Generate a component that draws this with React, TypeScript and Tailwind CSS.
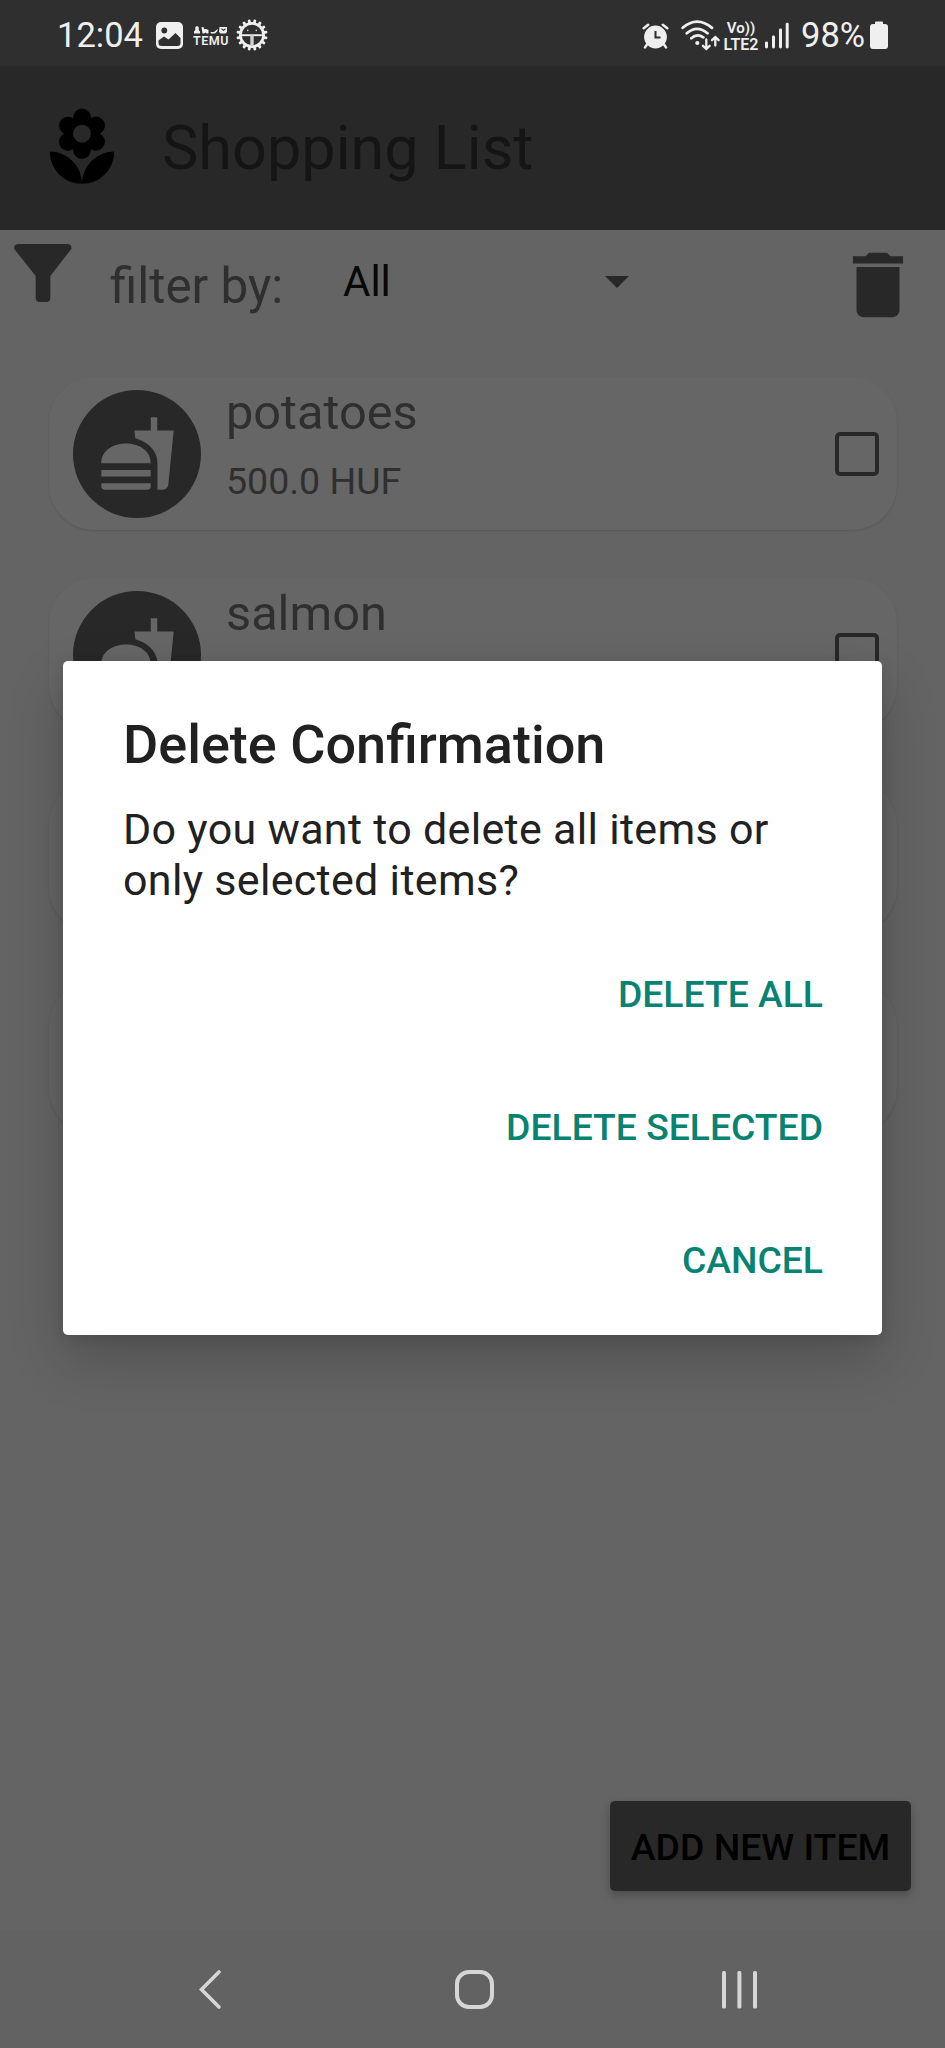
import { MdDelete, MdFastfood, MdLocalFlorist } from "react-icons/md";

const teeth = Array.from({ length: 16 }, (_, i) => i * 22.5);

function StatusBar() {
  return (
    <div className="flex h-[66px] w-full items-start bg-[#2f2f2f] text-[#efefef]">
      <span className="ml-[57px] mt-[15px] w-[98px] whitespace-nowrap text-[34.5px] leading-[40px]">12:04</span>
      <svg className="mt-[22px] ml-[1px] h-[27px] w-[27px]" viewBox="0 0 27 27">
        <rect width="27" height="27" rx="5" fill="#efefef" />
        <circle cx="8.3" cy="8.5" r="2.9" fill="#2f2f2f" />
        <path d="M2.5 20V18.5L8 14.5L12.5 17.5L19.5 11L24.5 16V21Q24.5 24 21.5 24H5.5Q2.5 24 2.5 21Z" fill="#2f2f2f" />
      </svg>
      <div className="ml-[10px] mt-[26px] flex w-[36px] flex-col">
        <svg className="h-[8px] w-[35px]" viewBox="0 0 35 8" fill="#efefef">
          <path d="M1 7.5V5.5L2.3 4V1L4 0L5.7 1V4L7 5.5V7.5ZM8.5 1L11 1.5V3H13L15.5 4V7.5H13.5L12.5 6.5L11 7.5H9.5ZM17.5 6H21L24.5 3V5L22 7.5H18ZM26.5 1H34V6L32.5 7.5H27.5L26 6ZM28 3L30.5 5L33 3L32 2.5L30.5 3.5L29 2.5Z" fillRule="evenodd" />
        </svg>
        <span className="-mt-[0.5px] whitespace-nowrap text-[12.5px] font-semibold leading-[14px] tracking-[0.5px]">TEMU</span>
      </div>
      <svg className="ml-[6.5px] mt-[19px] h-[32px] w-[32px]" viewBox="-16 -16 32 32">
        {teeth.map((a) => (
          <rect key={a} x="-1.4" y="-15.6" width="2.8" height="5" rx="1" fill="#efefef" transform={`rotate(${a + 11.25})`} />
        ))}
        <circle r="11.6" fill="none" stroke="#efefef" strokeWidth="2.8" />
        <path d="M-11 .2H11" stroke="#efefef" strokeWidth="1.9" />
        <path d="M0 0V11" stroke="#d0d0d0" strokeWidth="3.4" />
        <circle cx="-4.3" cy="-4.6" r=".8" fill="#cccccc" />
        <circle cx="4.3" cy="-4.6" r=".8" fill="#cccccc" />
      </svg>
      <svg className="ml-auto mt-[23px] h-[26px] w-[27px]" viewBox="0 0 27 26">
        <circle cx="13.5" cy="14" r="11.4" fill="#efefef" />
        <path d="M1.7 5.2L6.2 1.7M25.3 5.2L20.8 1.7M5 21.5L3 24.4M22 21.5L24 24.4" stroke="#efefef" strokeWidth="2.5" strokeLinecap="round" />
        <path d="M13.5 8V14.5H18.5" stroke="#2f2f2f" strokeWidth="2" fill="none" />
      </svg>
      <svg className="ml-[12px] mt-[20px] h-[31px] w-[39px]" viewBox="0 0 39 31" fill="none" stroke="#efefef" strokeLinecap="round" strokeWidth="2.8">
        <path d="M1.7 7.8Q16 -4.5 31 7.8M5.8 13.3Q16 4.5 26.5 13.3M10.3 18.3Q16 13 22.3 17.3" />
        <circle cx="16.3" cy="23" r="2.1" fill="#efefef" stroke="none" />
        <path d="M25.3 19.5V28.5M22 25.8L25.3 29L28.6 25.8M34.3 25.5V17.5M31 20.2L34.3 17L37.6 20.2" strokeWidth="2.3" />
      </svg>
      <div className="ml-[3px] mt-[20px] flex w-[36px] flex-col items-center">
        <span className="whitespace-nowrap text-[15px] font-semibold leading-[16px]">Vo))</span>
        <span className="-mt-[0.5px] whitespace-nowrap text-[16px] font-semibold leading-[17px]">LTE2</span>
      </div>
      <svg className="ml-[6px] mt-[22px] h-[27px] w-[25px]" viewBox="0 0 25 27" fill="#efefef">
        <rect x="0" y="19.5" width="3" height="7" rx="1.4" />
        <rect x="7" y="13.5" width="3" height="13" rx="1.4" />
        <rect x="14" y="6.5" width="3" height="20" rx="1.4" />
        <rect x="20.7" y="0.7" width="3" height="25.8" rx="1.4" />
      </svg>
      <span className="ml-[11px] mt-[15px] w-[65px] whitespace-nowrap text-[34.5px] leading-[40px]">98%</span>
      <svg className="ml-[4px] mr-[57px] mt-[21px] h-[28px] w-[18px]" viewBox="0 0 18 28" fill="#efefef">
        <path d="M5 3V1.5Q5 .5 6 .5H12Q13 .5 13 1.5V3H15Q18 3 18 6V25Q18 28 15 28H3Q0 28 0 25V6Q0 3 3 3Z" />
      </svg>
    </div>
  );
}

function ItemCard({ name, price }: { name: string; price: string }) {
  return (
    <div className="flex h-[153px] w-full shrink-0 items-center rounded-[45px] bg-[#666666] pl-[24.5px] pr-[17.5px] shadow-[0_1px_2px_rgba(0,0,0,0.12)]">
      <div className="flex h-[128px] w-[128px] items-center justify-center rounded-full bg-[#282828]">
        <MdFastfood className="h-[79px] w-[79px] text-[#666666]" />
      </div>
      <div className="ml-[25px] flex h-full flex-1 flex-col whitespace-nowrap text-[#2f2f2f]">
        <span className="mt-[6px] text-[48.7px] leading-[60px]">{name}</span>
        <span className="mt-[15.5px] text-[37.5px] leading-[44px]">{price}</span>
      </div>
      <div className="h-[44px] w-[44px] rounded-[5px] border-[4.5px] border-[#282828]" />
    </div>
  );
}

function Dialog() {
  return (
    <div className="absolute left-[63px] top-[661px] flex h-[673.5px] w-[819px] flex-col rounded-[5px] bg-white pl-[60px] pr-[59px] pt-[51.5px] text-[#212121] shadow-[0_24px_56px_rgba(0,0,0,0.2),0_4px_14px_rgba(0,0,0,0.1)]">
      <h2 className="whitespace-nowrap text-[54px] font-medium leading-[64px]">Delete Confirmation</h2>
      <p className="mt-[27.5px] whitespace-nowrap text-[43px] leading-[51px] tracking-[0.31px]">
        Do you want to delete all items or
        <br />
        only selected items?
      </p>
      <div className="mt-[22px] flex flex-col items-end whitespace-nowrap text-[37.3px] font-medium leading-[133px] text-[#088372]">
        <button>DELETE ALL</button>
        <button>DELETE SELECTED</button>
        <button>CANCEL</button>
      </div>
    </div>
  );
}

export default function App() {
  return (
    <div className="relative flex h-[2048px] w-[945px] flex-col overflow-hidden bg-[#646464] font-[Roboto,sans-serif]">
      <StatusBar />
      <header className="flex h-[164px] items-center bg-[#282828] pl-[39px]">
        <MdLocalFlorist className="h-[86px] w-[86px] text-black" />
        <h1 className="ml-[37px] whitespace-nowrap text-[61.2px] leading-[72px] text-[#151515]">Shopping List</h1>
      </header>
      <div className="flex h-[147px] items-start">
        <svg className="ml-[14px] mt-[14px] h-[58px] w-[58px]" viewBox="0 0 58 58" fill="#282828">
          <path d="M4 0H54Q57.5 .5 57.5 4Q57.5 5 56.5 6L36.3 32V54Q36.3 58 32.3 58H25.7Q21.7 58 21.7 54V32L1 6Q0 5 0 4Q0 .5 4 0Z" />
        </svg>
        <span className="ml-[38px] mt-[26px] w-[172px] whitespace-nowrap text-[49.3px] leading-[60px] text-[#2f2f2f]">filter by:</span>
        <div className="ml-[61px] mt-[27px] flex w-[286px] items-center justify-between">
          <span className="text-[42px] leading-[50px] text-[#080808]">All</span>
          <svg className="h-[12px] w-[24px]" viewBox="0 0 24 12" fill="#282828">
            <path d="M0 0H24L12 12Z" />
          </svg>
        </div>
        <MdDelete className="ml-auto mr-[24px] mt-[12px] h-[86px] w-[86px] text-[#282828]" />
      </div>
      <main className="flex flex-col gap-[48.3px] px-[48.5px]">
        <ItemCard name="potatoes" price="500.0 HUF" />
        <ItemCard name="salmon" price="" />
        <ItemCard name="" price="" />
        <ItemCard name="" price="" />
      </main>
      <div className="mt-auto flex h-[130px] shrink-0 items-start justify-end pr-[34px]">
        <button className="h-[90px] w-[301px] whitespace-nowrap rounded-[5px] bg-[#282828] pt-[2px] text-[37.4px] font-medium text-black shadow-[0_4px_8px_rgba(0,0,0,0.25)]">ADD NEW ITEM</button>
      </div>
      <nav className="flex h-[117px] shrink-0 items-start bg-[#626262] pt-[38px]">
        <svg className="ml-[197px] h-[42px] w-[26px]" viewBox="0 0 26 42" fill="none" stroke="#d6d6d6" strokeWidth="3.6" strokeLinecap="round">
          <path d="M22 3L4.5 20.5L22 38" />
        </svg>
        <svg className="ml-[232px] h-[40px] w-[39px]" viewBox="0 0 39 40" fill="none" stroke="#d6d6d6" strokeWidth="4">
          <rect x="2" y="3" width="35" height="35" rx="12" />
        </svg>
        <svg className="ml-[227px] h-[40px] w-[37px]" viewBox="0 0 37 40" fill="#d6d6d6">
          <rect x="1" y="2" width="4" height="37.5" rx="1.5" />
          <rect x="16.4" y="2" width="4" height="37.5" rx="1.5" />
          <rect x="32" y="2" width="4" height="37.5" rx="1.5" />
        </svg>
      </nav>
      <Dialog />
    </div>
  );
}
